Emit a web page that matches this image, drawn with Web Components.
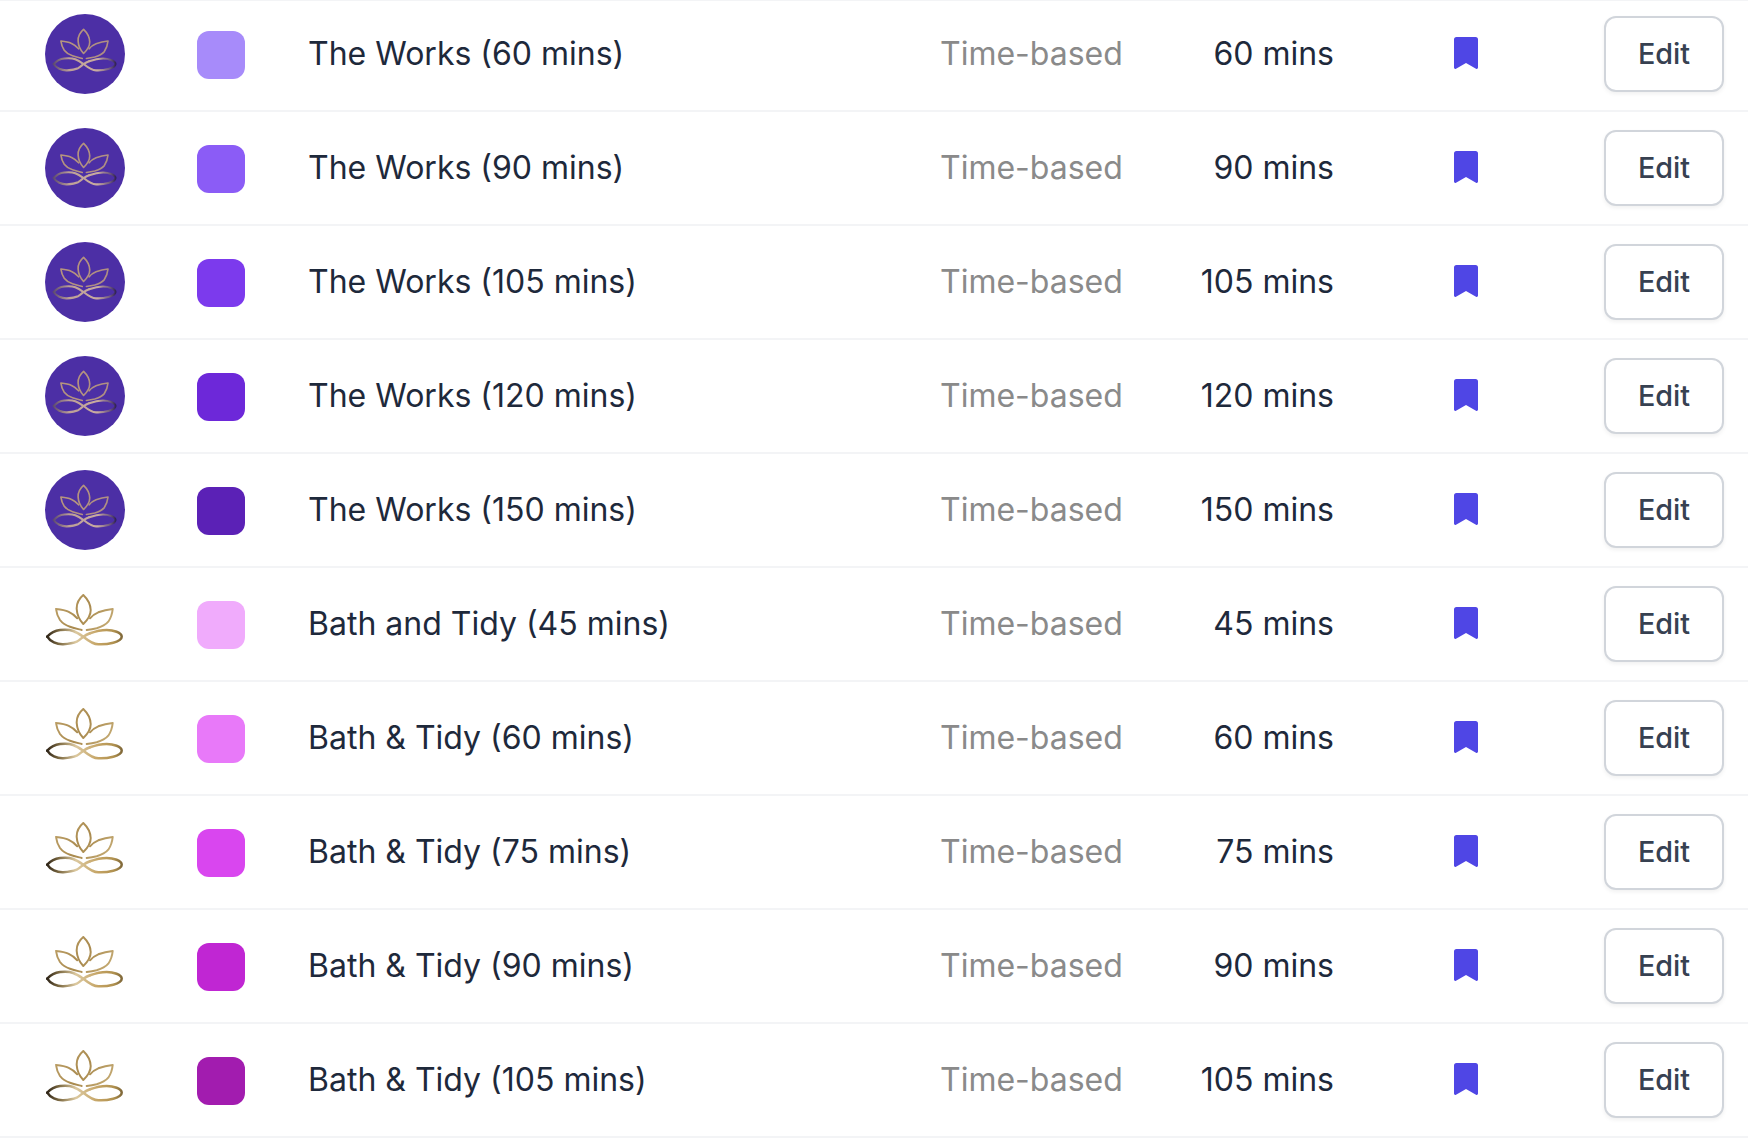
<!DOCTYPE html>
<html>
<head>
<meta charset="utf-8">
<title>Services</title>
<style>
html, body { margin: 0; background: #fff; overflow: hidden; }
body { font-family: Inter, "Liberation Sans", sans-serif; }
</style>
</head>
<body>
<service-list id="list"></service-list>
<script>
const lotusTemplate = document.createElement("template")
lotusTemplate.innerHTML = `
<style>
:host { display: block; width: 80px; height: 80px; border-radius: 50%; }
:host([filled]) { background: #4c2fa5; }
svg { display: block; width: 100%; height: 100%; filter: blur(0.3px); }
:host([filled]) svg { transform: scale(0.83); transform-origin: 40px 37px; }
path { fill: none; stroke-linecap: round; stroke-linejoin: round; }
</style>
<svg viewBox="0 0 80 80">
  <defs>
    <linearGradient id="gold" gradientUnits="userSpaceOnUse" x1="10" y1="10" x2="68" y2="50">
      <stop offset="0" stop-color="#bfa26a"/>
      <stop offset="0.5" stop-color="#a98a4e"/>
      <stop offset="1" stop-color="#cbb27c"/>
    </linearGradient>
    <linearGradient id="loop" gradientUnits="userSpaceOnUse" x1="2" y1="0" x2="78" y2="0">
      <stop offset="0" stop-color="#2f2518"/>
      <stop offset="0.16" stop-color="#7d6a42"/>
      <stop offset="0.38" stop-color="#dcc9a0"/>
      <stop offset="0.68" stop-color="#c4a363"/>
      <stop offset="0.88" stop-color="#b0914f"/>
      <stop offset="1" stop-color="#7a6336"/>
    </linearGradient>
    <linearGradient id="rose" gradientUnits="userSpaceOnUse" x1="10" y1="10" x2="68" y2="50">
      <stop offset="0" stop-color="#b8967c"/>
      <stop offset="1" stop-color="#ad8d84"/>
    </linearGradient>
    <linearGradient id="roseLoop" gradientUnits="userSpaceOnUse" x1="2" y1="0" x2="78" y2="0">
      <stop offset="0" stop-color="#5d4a72"/>
      <stop offset="0.25" stop-color="#bda096"/>
      <stop offset="0.7" stop-color="#c9aca0"/>
      <stop offset="0.9" stop-color="#6b5580"/>
      <stop offset="1" stop-color="#2a1c50"/>
    </linearGradient>
  </defs>
  <g class="petals" stroke-width="2">
    <path d="M38.3 11C33.5 15 31.5 20 31.7 25C32 31 34.5 36 38.3 40C42.5 36 45.8 31.5 45.7 26C45.5 20 42.5 15 38.3 11Z"/>
    <path d="M11 25C16 25.5 20 26 23.3 27.7C27 29.5 30 31.5 32.3 34.3M11 25C11.5 29 13 33 15 36C18 40 21 41.5 25 42.7C29 44 33 45 36.7 46"/>
    <path d="M67.7 25C62 25.5 58 26.5 53.3 28.3C50 29.7 47 31.7 45 34.3M67.7 25C67.3 29 65.5 34.5 63.3 37.7C60 41.5 56 43 51.7 44.3C48 45.3 45 45.7 41.7 46"/>
  </g>
  <g class="loops" stroke-width="2.5">
    <path d="M2.3 52.7C6 48.5 10 46.5 15 46C20 45.5 24.5 45.5 28.3 47C32 48.5 35 50.5 38.3 52.7C43 56.5 48 60.3 53.3 60.3C62 60.8 76.7 58 76.7 52.7C76.7 48.5 68 46 61.7 46C56 46 50 47.5 45 49.3"/>
    <path d="M2.3 52.7C5 57.5 12 60.6 18.3 60.3C23 60 27.5 59.5 31.7 57.7C34 56.5 36 54.5 38.3 52.7C40.5 51.2 42.5 50.2 45 49.3"/>
  </g>
</svg>`

class LotusMark extends HTMLElement {
    constructor() {
        super()
        this.attachShadow({mode: "open"})
        this.shadowRoot.appendChild(lotusTemplate.content.cloneNode(true))
    }

    connectedCallback() {
        let filled = this.hasAttribute("filled")
        // ids are per shadow root so the same names can be reused
        this.shadowRoot.querySelector(".petals").setAttribute("stroke", filled ? "url(#rose)" : "url(#gold)")
        this.shadowRoot.querySelector(".loops").setAttribute("stroke", filled ? "url(#roseLoop)" : "url(#loop)")
    }
}
customElements.define("lotus-mark", LotusMark)

class BookmarkIcon extends HTMLElement {
    constructor() {
        super()
        this.attachShadow({mode: "open"}).innerHTML = `
<style>
:host { display: block; width: 24px; height: 32px; margin-top: -2px; }
svg { display: block; width: 24px; height: 32px; }
</style>
<svg viewBox="0 0 24 32"><path fill="#4f46e5" d="M2.5 0H21.5A2.5 2.5 0 0 1 24 2.5V30.6C24 31.7 23 32.3 22 31.8L12 26L2 31.8C1 32.3 0 31.7 0 30.6V2.5A2.5 2.5 0 0 1 2.5 0Z"/></svg>`
    }
}
customElements.define("bookmark-icon", BookmarkIcon)

class EditButton extends HTMLElement {
    constructor() {
        super()
        this.attachShadow({mode: "open"}).innerHTML = `
<style>
:host { display: block; margin-top: -1px; }
button {
    display: block;
    width: 120px;
    height: 76px;
    box-sizing: border-box;
    padding: 0;
    background: #fff;
    border: 2px solid #d1d5db;
    border-radius: 12px;
    box-shadow: 0 2px 4px rgba(0, 0, 0, 0.06);
    color: #374151;
    font: 500 28.8px Inter, "Liberation Sans", sans-serif;
}
</style>
<button><slot>Edit</slot></button>`
    }
}
customElements.define("edit-button", EditButton)

const rowTemplate = document.createElement("template")
rowTemplate.innerHTML = `
<style>
:host {
    display: grid;
    grid-template-columns: 152px 112px 631px 182px 212px 144px 246px;
    align-items: center;
    box-sizing: border-box;
    height: 114px;
    padding-left: 45px;
    border-bottom: 2px solid #f3f4f6;
    font: 400 32px Inter, "Liberation Sans", sans-serif;
    color: #1e293b;
}
.swatch { width: 48px; height: 48px; border-radius: 12px; margin-top: 2px; }
.name, .kind, .length { white-space: nowrap; margin-top: -2px; }
.name { margin-left: -1px; }
.kind { color: #8a8a8a; }
.length { text-align: right; }
bookmark-icon, edit-button { justify-self: end; }
</style>
<lotus-mark></lotus-mark>
<div class="swatch"></div>
<div class="name"><slot></slot></div>
<div class="kind">Time-based</div>
<div class="length"></div>
<bookmark-icon></bookmark-icon>
<edit-button></edit-button>`

class ServiceRow extends HTMLElement {
    constructor() {
        super()
        this.attachShadow({mode: "open"})
        this.shadowRoot.appendChild(rowTemplate.content.cloneNode(true))
    }

    connectedCallback() {
        this.shadowRoot.querySelector(".swatch").style.background = this.getAttribute("color")
        this.shadowRoot.querySelector(".length").textContent = this.getAttribute("length")
        if (this.hasAttribute("filled")) {
            this.shadowRoot.querySelector("lotus-mark").setAttribute("filled", "")
        }
    }
}
customElements.define("service-row", ServiceRow)

class ServiceList extends HTMLElement {
    constructor() {
        super()
        this.attachShadow({mode: "open"}).innerHTML = `
<style>
:host { display: block; margin-top: -2px; box-shadow: inset 0 3px #f3f4f6; }
</style>
<slot></slot>`
    }
}
customElements.define("service-list", ServiceList)

const services = [
    ["The Works (60 mins)", "60 mins", "#a78bfa", true],
    ["The Works (90 mins)", "90 mins", "#8b5cf6", true],
    ["The Works (105 mins)", "105 mins", "#7c3aed", true],
    ["The Works (120 mins)", "120 mins", "#6d28d9", true],
    ["The Works (150 mins)", "150 mins", "#5b21b6", true],
    ["Bath and Tidy (45 mins)", "45 mins", "#f0abfc", false],
    ["Bath & Tidy (60 mins)", "60 mins", "#e879f9", false],
    ["Bath & Tidy (75 mins)", "75 mins", "#d946ef", false],
    ["Bath & Tidy (90 mins)", "90 mins", "#c026d3", false],
    ["Bath & Tidy (105 mins)", "105 mins", "#a21caf", false],
]

const list = document.getElementById("list")
services.forEach(s => {
    let row = document.createElement("service-row")
    row.textContent = s[0]
    row.setAttribute("length", s[1])
    row.setAttribute("color", s[2])
    if (s[3]) row.setAttribute("filled", "")
    list.appendChild(row)
})
</script>
</body>
</html>
